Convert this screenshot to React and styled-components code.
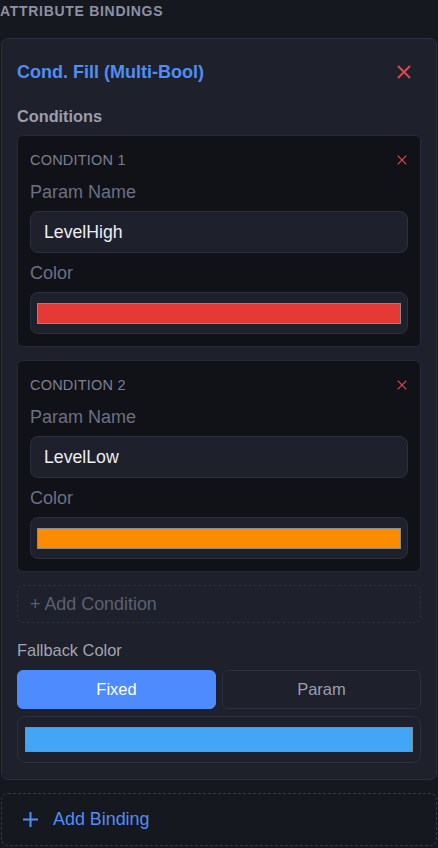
import React from 'react';
import styled, {createGlobalStyle} from 'styled-components';

const GlobalStyle = createGlobalStyle`
	html, body {
		margin: 0;
		padding: 0;
		background: #161820;
		font-family: 'Liberation Sans', Arial, sans-serif;
	}
	* {
		box-sizing: border-box;
	}
`;

const Panel = styled.div`
	padding: 3px 1px 0 1px;
	height: 848px;
	overflow: hidden;
`;

const SectionTitle = styled.div`
	font-size: 14px;
	line-height: 17px;
	font-weight: 700;
	letter-spacing: 0.7px;
	text-transform: uppercase;
	color: #8d91a3;
	margin-left: -1px;
`;

const Card = styled.div`
	margin-top: 18px;
	background: #1e202b;
	border: 1px solid #2b2e3b;
	border-radius: 7px;
	padding: 15px 15px 16px 15px;
	display: flex;
	flex-direction: column;
`;

const CardHeader = styled.div`
	height: 36px;
	display: flex;
	align-items: center;
	justify-content: space-between;
`;

const CardTitle = styled.div`
	font-size: 18px;
	font-weight: 700;
	color: #4f8ef5;
`;

const CloseButton = styled.button`
	background: none;
	border: none;
	padding: 0;
	margin-right: ${p => p.mr}px;
	width: ${p => p.size}px;
	height: ${p => p.size}px;
	display: flex;
	align-items: center;
	justify-content: center;
	cursor: pointer;
`;

const SubTitle = styled.div`
	margin-top: 16px;
	margin-bottom: 9px;
	font-size: 16.3px;
	line-height: 20px;
	font-weight: 700;
	color: #9a9eae;
`;

const ConditionCard = styled.div`
	background: #111217;
	border: 1px solid #272a36;
	border-radius: 6px;
	padding: 12px;
	display: flex;
	flex-direction: column;
	& + & {
		margin-top: 13px;
	}
`;

const ConditionHeader = styled.div`
	height: 24px;
	display: flex;
	align-items: center;
	justify-content: space-between;
	margin-bottom: 10px;
`;

const ConditionLabel = styled.div`
	font-size: 14.5px;
	color: #7b7f93;
	letter-spacing: 0.2px;
`;

const FieldLabel = styled.div`
	font-size: 18px;
	line-height: 20px;
	color: #6b7086;
	margin-bottom: 9px;
	margin-top: ${p => (p.first ? 0 : 10)}px;
`;

const TextInput = styled.div`
	height: 42px;
	background: #1e202b;
	border: 1px solid #2c2f3c;
	border-radius: 8px;
	padding: 0 13px;
	display: flex;
	align-items: center;
	font-size: 17.7px;
	color: #eceef3;
`;

const ColorBox = styled.div`
	height: ${p => p.h}px;
	background: #1e202b;
	border: 1px solid #2c2f3c;
	border-radius: 8px;
	padding: 0 ${p => p.px}px;
	display: flex;
	align-items: center;
`;

const Swatch = styled.div`
	flex: 1;
	height: ${p => p.h}px;
	background: ${p => p.color};
	border: 1px solid #8a8a8f;
`;

const AddCondition = styled.div`
	margin-top: 13px;
	height: 38px;
	border: 1px dashed #2d303d;
	border-radius: 6px;
	padding: 0 12px;
	display: flex;
	align-items: center;
	font-size: 17.9px;
	color: #5b6074;
`;

const FallbackLabel = styled.div`
	margin-top: 17px;
	font-size: 16.4px;
	line-height: 20px;
	color: #a3a6b3;
`;

const ToggleRow = styled.div`
	margin-top: 10px;
	display: grid;
	grid-template-columns: 1fr 1fr;
	gap: 6px;
`;

const ToggleButton = styled.button`
	height: 39px;
	border-radius: 6px;
	font-family: 'Liberation Sans', Arial, sans-serif;
	font-size: 16.5px;
	border: 1px solid ${p => (p.active ? '#4d8bff' : '#2c2f3c')};
	background: ${p => (p.active ? '#4d8bff' : 'transparent')};
	color: ${p => (p.active ? '#ffffff' : '#9a9eae')};
`;

const FallbackBox = styled(ColorBox)`
	margin-top: 7px;
`;

const AddBinding = styled.div`
	margin-top: 13px;
	height: 53px;
	border: 1px dashed #363947;
	border-radius: 7px;
	display: flex;
	align-items: center;
	padding-left: 21px;
	gap: 15px;
	font-size: 17.9px;
	color: #4f8ef5;
`;

const XIcon = ({size, stroke}) => (
	<svg width={size} height={size} viewBox="0 0 14 14" fill="none">
		<path d="M1 1L13 13M13 1L1 13" stroke="#e5484d" strokeWidth={stroke} strokeLinecap="butt"/>
	</svg>
);

const PlusIcon = () => (
	<svg width="15" height="15" viewBox="0 0 15 15" fill="none">
		<path d="M7.5 0V15M0 7.5H15" stroke="#4f8ef5" strokeWidth="2"/>
	</svg>
);

const conditions = [
	{param: 'LevelHigh', color: '#e53935'},
	{param: 'LevelLow', color: '#fb8c00'},
];

const Condition = ({index, param, color}) => (
	<ConditionCard>
		<ConditionHeader>
			<ConditionLabel>CONDITION {index}</ConditionLabel>
			<CloseButton size={10} mr={1}>
				<XIcon size={10} stroke={1.6}/>
			</CloseButton>
		</ConditionHeader>
		<FieldLabel first>Param Name</FieldLabel>
		<TextInput>{param}</TextInput>
		<FieldLabel>Color</FieldLabel>
		<ColorBox h={42} px={6}>
			<Swatch h={21} color={color}/>
		</ColorBox>
	</ConditionCard>
);

export default class App extends React.Component {
	render() {
		return (
			<Panel>
				<GlobalStyle/>
				<SectionTitle>Attribute Bindings</SectionTitle>
				<Card>
					<CardHeader>
						<CardTitle>Cond. Fill (Multi-Bool)</CardTitle>
						<CloseButton size={14} mr={10}>
							<XIcon size={14} stroke={1.8}/>
						</CloseButton>
					</CardHeader>
					<SubTitle>Conditions</SubTitle>
					{conditions.map((c, i) => (
						<Condition key={c.param} index={i + 1} param={c.param} color={c.color}/>
					))}
					<AddCondition>+ Add Condition</AddCondition>
					<FallbackLabel>Fallback Color</FallbackLabel>
					<ToggleRow>
						<ToggleButton active>Fixed</ToggleButton>
						<ToggleButton>Param</ToggleButton>
					</ToggleRow>
					<FallbackBox h={47} px={7}>
						<Swatch h={25} color="#42a5f5"/>
					</FallbackBox>
				</Card>
				<AddBinding>
					<PlusIcon/>
					Add Binding
				</AddBinding>
			</Panel>
		);
	}
}
